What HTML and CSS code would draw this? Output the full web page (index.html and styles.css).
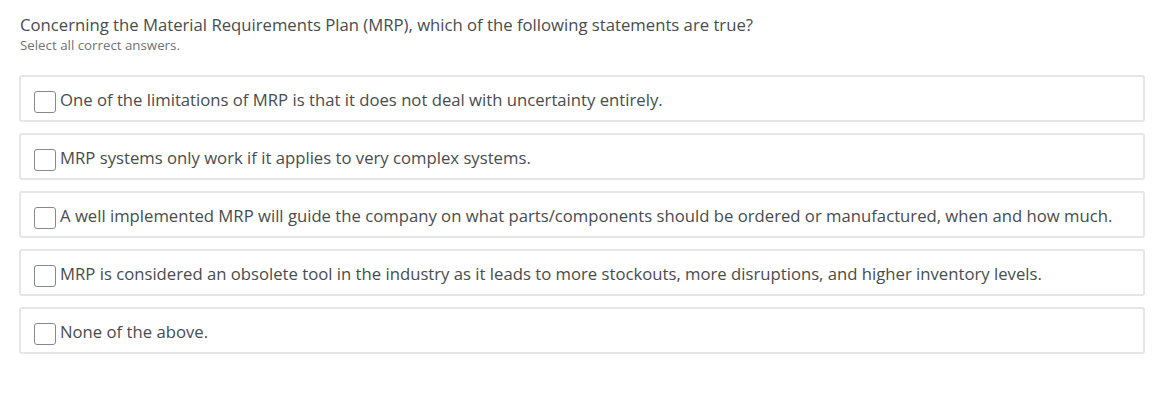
FILE: index.html
```html
<!DOCTYPE html>
<html>
<head>
<meta charset="utf-8">
<link rel="stylesheet" href="styles.css">
</head>
<body>
<div class="question">
  <div class="prompt">Concerning the Material Requirements Plan (MRP), which of the following statements are true?</div>
  <div class="hint">Select all correct answers.</div>
  <div class="options">
    <label class="option"><span class="box"></span><span class="text">One of the limitations of MRP is that it does not deal with uncertainty entirely.</span></label>
    <label class="option"><span class="box"></span><span class="text">MRP systems only work if it applies to very complex systems.</span></label>
    <label class="option"><span class="box"></span><span class="text">A well implemented MRP will guide the company on what parts/components should be ordered or manufactured, when and how much.</span></label>
    <label class="option"><span class="box"></span><span class="text">MRP is considered an obsolete tool in the industry as it leads to more stockouts, more disruptions, and higher inventory levels.</span></label>
    <label class="option"><span class="box"></span><span class="text">None of the above.</span></label>
  </div>
</div>
</body>
</html>
```
FILE: styles.css
```css
html, body {
  margin: 0;
  padding: 0;
  background: #ffffff;
}
body {
  font-family: "Open Sans", "DejaVu Sans", sans-serif;
  color: #494c4e;
}
.question {
  padding: 13px 31px 0 19px;
}
.prompt {
  font-size: 16.7px;
  line-height: 24px;
  padding-left: 1px;
  color: #494c4e;
}
.hint {
  font-size: 13.3px;
  line-height: 17px;
  padding-left: 1px;
  color: #6e7376;
}
.options {
  display: flex;
  flex-direction: column;
  gap: 11px;
  margin-top: 21px;
}
.option {
  display: flex;
  align-items: center;
  height: 41px;
  border: 2px solid #e6e6e6;
  border-radius: 3px;
  padding: 2px 0 0 13px;
  box-sizing: content-box;
}
.box {
  width: 20px;
  height: 20px;
  border: 1px solid #868a8d;
  border-radius: 3px;
  background: #fff;
  flex: none;
  margin: 4px 4px 0 0;
}
.text {
  font-size: 16.7px;
  line-height: 22px;
  color: #494c4e;
}
```
